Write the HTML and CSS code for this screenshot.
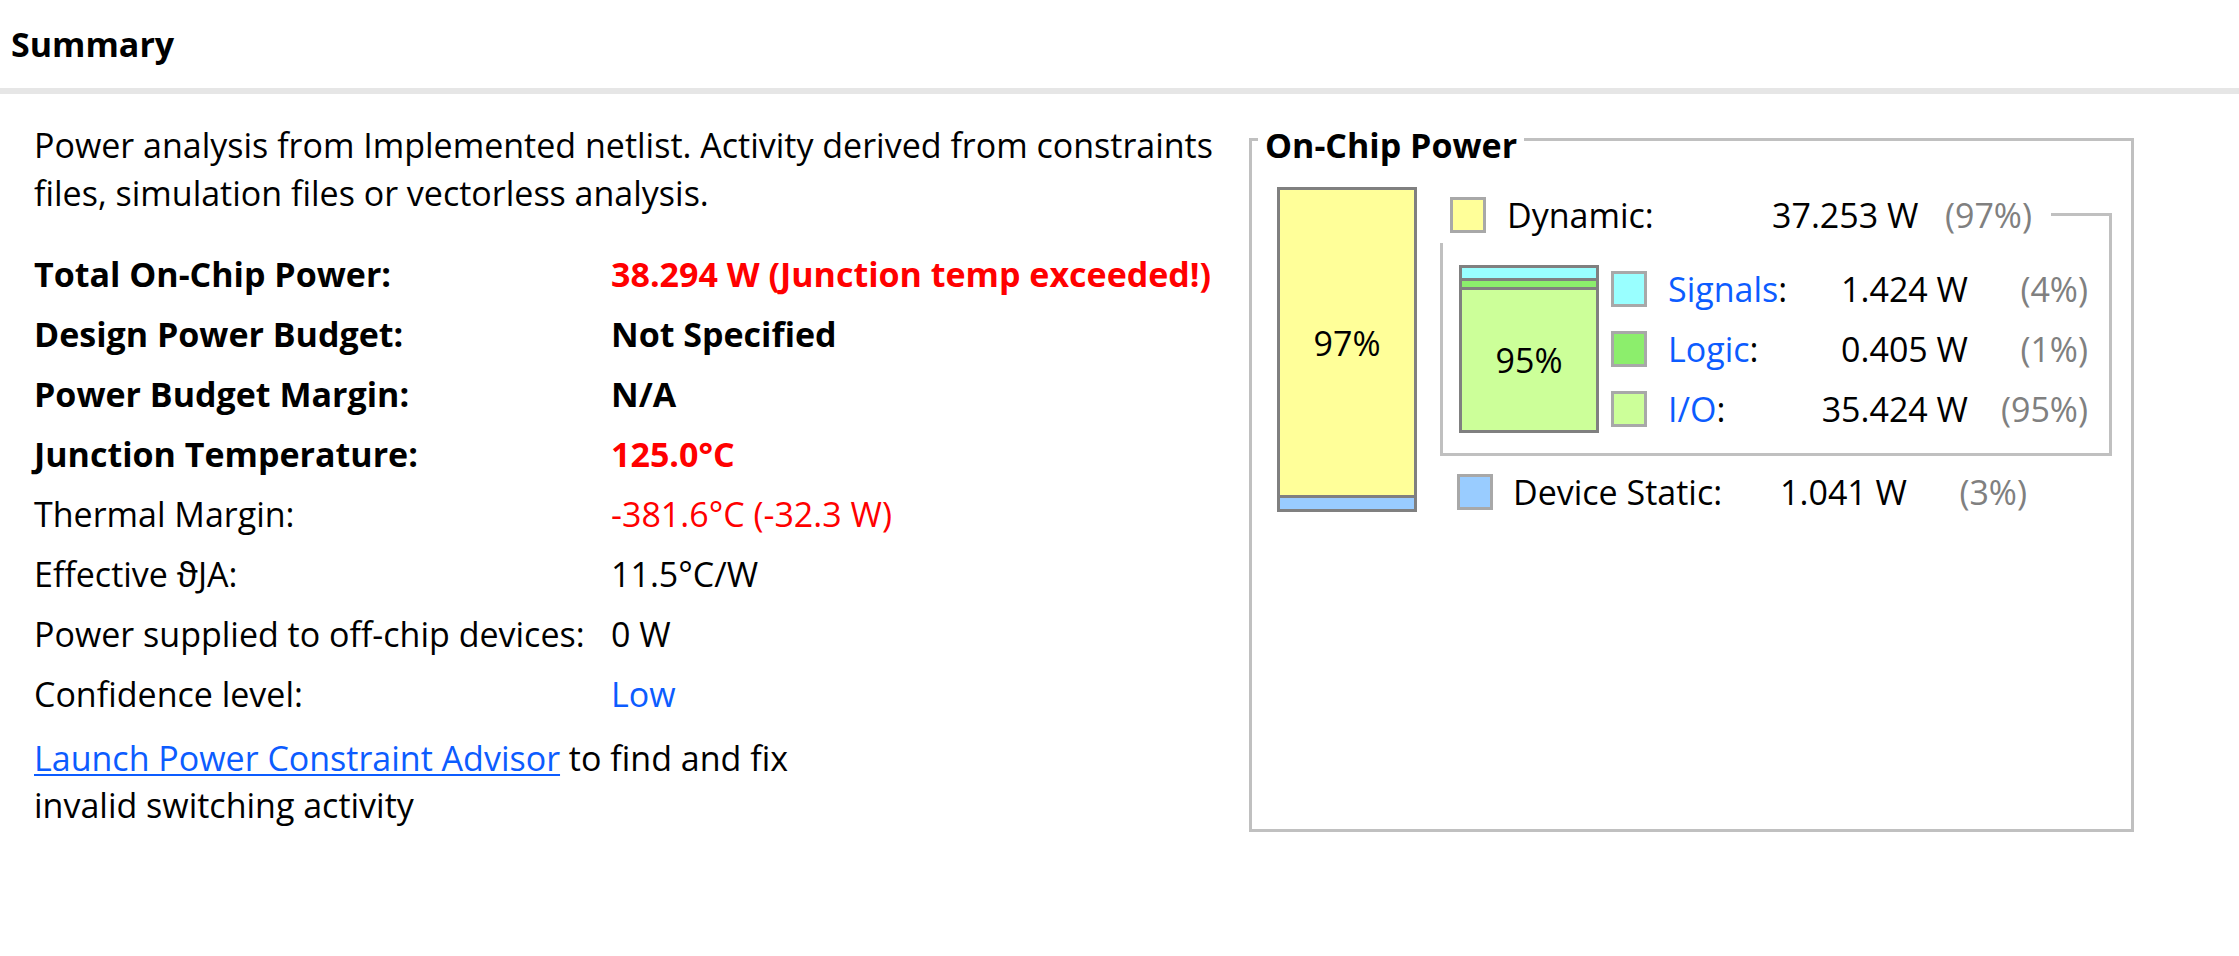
FILE: index.html
```html
<!DOCTYPE html>
<html lang="en">
<head>
<meta charset="utf-8">
<title>Summary</title>
<link rel="stylesheet" href="styles.css">
</head>
<body>
<header class="header"><h1 class="title">Summary</h1></header>
<main class="content">
  <section class="summary">
    <p class="intro">Power analysis from Implemented netlist. Activity derived from constraints files, simulation files or vectorless analysis.</p>
    <div class="facts">
      <div class="label strong">Total On-Chip Power:</div><div class="value strong red">38.294 W (Junction temp exceeded!)</div>
      <div class="label strong">Design Power Budget:</div><div class="value strong">Not Specified</div>
      <div class="label strong">Power Budget Margin:</div><div class="value strong">N/A</div>
      <div class="label strong">Junction Temperature:</div><div class="value strong red">125.0°C</div>
      <div class="label">Thermal Margin:</div><div class="value red">-381.6°C (-32.3 W)</div>
      <div class="label">Effective <span class="theta">ϑ</span>JA:</div><div class="value">11.5°C/W</div>
      <div class="label">Power supplied to off-chip devices:</div><div class="value">0 W</div>
      <div class="label">Confidence level:</div><div class="value blue">Low</div>
    </div>
    <p class="advisor"><a class="link" href="#">Launch Power Constraint Advisor</a> to find and fix invalid switching activity</p>
  </section>
  <fieldset class="onchip">
    <legend class="onchip-title">On-Chip Power</legend>
    <div class="chart">
      <div class="bar bar-total">
        <div class="seg seg-dynamic">97%</div>
        <div class="seg seg-static"></div>
      </div>
      <div class="breakdown">
        <div class="dyn-row">
          <span class="swatch sw-dynamic"></span>
          <span class="name dyn-name">Dynamic:</span>
          <span class="amount dyn-amount">37.253 W</span>
          <span class="pct dyn-pct">(97%)</span>
          <span class="connector"></span>
        </div>
        <div class="dyn-body">
          <div class="bar bar-dyn">
            <div class="seg seg-signals"></div>
            <div class="seg seg-logic"></div>
            <div class="seg seg-io">95%</div>
          </div>
          <div class="dyn-rows">
            <div class="sub-row"><span class="swatch sw-signals"></span><span class="name sub-name"><span class="blue">Signals</span>:</span><span class="amount sub-amount">1.424 W</span><span class="pct sub-pct">(4%)</span></div>
            <div class="sub-row"><span class="swatch sw-logic"></span><span class="name sub-name"><span class="blue">Logic</span>:</span><span class="amount sub-amount">0.405 W</span><span class="pct sub-pct">(1%)</span></div>
            <div class="sub-row"><span class="swatch sw-io"></span><span class="name sub-name"><span class="blue">I/O</span>:</span><span class="amount sub-amount">35.424 W</span><span class="pct sub-pct">(95%)</span></div>
          </div>
        </div>
        <div class="static-row">
          <span class="swatch sw-static"></span>
          <span class="name static-name">Device Static:</span>
          <span class="amount static-amount">1.041 W</span>
          <span class="pct static-pct">(3%)</span>
        </div>
      </div>
    </div>
  </fieldset>
</main>
</body>
</html>
```

FILE: styles.css
```css
* { box-sizing: border-box; }

html, body {
  margin: 0;
  padding: 0;
  background: #ffffff;
}

body {
  font-family: "Open Sans", "Noto Sans", "DejaVu Sans", sans-serif;
  font-size: 34px;
  color: #000000;
}

.header {
  height: 94px;
  border-bottom: 6px solid #e6e6e6;
  padding-left: 11px;
}

.title {
  margin: 0;
  font-size: 34px;
  font-weight: 700;
  line-height: 88px;
}

.content {
  display: flex;
  align-items: flex-start;
}

.summary {
  flex: none;
  width: 1249px;
  padding-left: 34px;
}

.intro {
  margin: 27px 0 0 0;
  line-height: 48px;
  max-width: 1215px;
}

.facts {
  margin-top: 27px;
  display: grid;
  grid-template-columns: 577px 1fr;
  line-height: 60px;
}

.label, .value { white-space: nowrap; }

.theta {
  font-family: "Noto Sans", "DejaVu Sans", sans-serif;
  line-height: 1;
}

.strong { font-weight: 700; }
.red { color: #ff0000; }
.blue { color: #0c5cff; }

.advisor {
  margin: 11px 0 0 0;
  line-height: 47px;
  max-width: 810px;
}

.link {
  color: #0c5cff;
  text-decoration: underline;
  text-underline-offset: 3px;
  text-decoration-thickness: 2px;
}

/* On-chip power panel */
.onchip {
  flex: none;
  margin: 20px 0 0 0;
  width: 885px;
  height: 718px;
  border: 3px solid #c0c0c0;
  padding: 22px 19px 0 6px;
  min-width: 0;
}

.onchip-title {
  margin-left: 0;
  padding: 11px 7px 0 7px;
  font-weight: 700;
  line-height: 40px;
}

.chart {
  display: flex;
  align-items: flex-start;
  padding-left: 19px;
}

.bar {
  flex: none;
  display: flex;
  flex-direction: column;
  width: 140px;
  border: 3px solid #808080;
}

.bar-total { height: 325px; }

.seg {
  display: flex;
  align-items: center;
  justify-content: center;
}

.seg-dynamic {
  flex: 1;
  background: #ffff99;
}

.seg-static {
  height: 14px;
  border-top: 3px solid #808080;
  background: #99ccff;
}

.breakdown {
  margin-left: 23px;
  width: 672px;
}

.swatch {
  flex: none;
  display: block;
  width: 36px;
  height: 36px;
  border: 3px solid #a8a8a8;
}

.sw-dynamic { background: #ffff99; }
.sw-signals { background: #99ffff; }
.sw-logic { background: #8cee6c; }
.sw-io { background: #ccff99; }
.sw-static { background: #99ccff; }

.name, .amount, .pct {
  flex: none;
  white-space: nowrap;
}

.amount, .pct { text-align: right; }
.pct { color: #808080; }

.dyn-row {
  display: flex;
  align-items: center;
  height: 56px;
}

.dyn-row .swatch { margin-left: 10px; }
.dyn-name { margin-left: 21px; width: 265px; }
.dyn-amount { width: 140px; }
.dyn-pct { width: 120px; }

.connector {
  flex: 1;
  align-self: flex-end;
  margin-left: 19px;
  height: 30px;
  border-top: 3px solid #c0c0c0;
  border-right: 3px solid #c0c0c0;
}

.dyn-body {
  display: flex;
  align-items: center;
  border: 3px solid #c0c0c0;
  border-top: none;
  padding: 16px 21px 14px 16px;
}

.bar-dyn { height: 168px; }

.seg-signals {
  height: 10px;
  background: #99ffff;
}

.seg-logic {
  height: 9px;
  border-top: 3px solid #808080;
  background: #8cee6c;
}

.seg-io {
  flex: 1;
  border-top: 3px solid #808080;
  background: #ccff99;
}

.dyn-rows {
  margin-left: 12px;
}

.sub-row {
  display: flex;
  align-items: center;
  height: 60px;
}

.sub-name { margin-left: 21px; width: 150px; }
.sub-amount { width: 150px; }
.sub-pct { width: 120px; }

.static-row {
  display: flex;
  align-items: center;
  height: 48px;
  margin-top: 12px;
}

.static-row .swatch { margin-left: 17px; }
.static-name { margin-left: 20px; width: 254px; }
.static-amount { width: 140px; }
.static-pct { width: 120px; }
```
